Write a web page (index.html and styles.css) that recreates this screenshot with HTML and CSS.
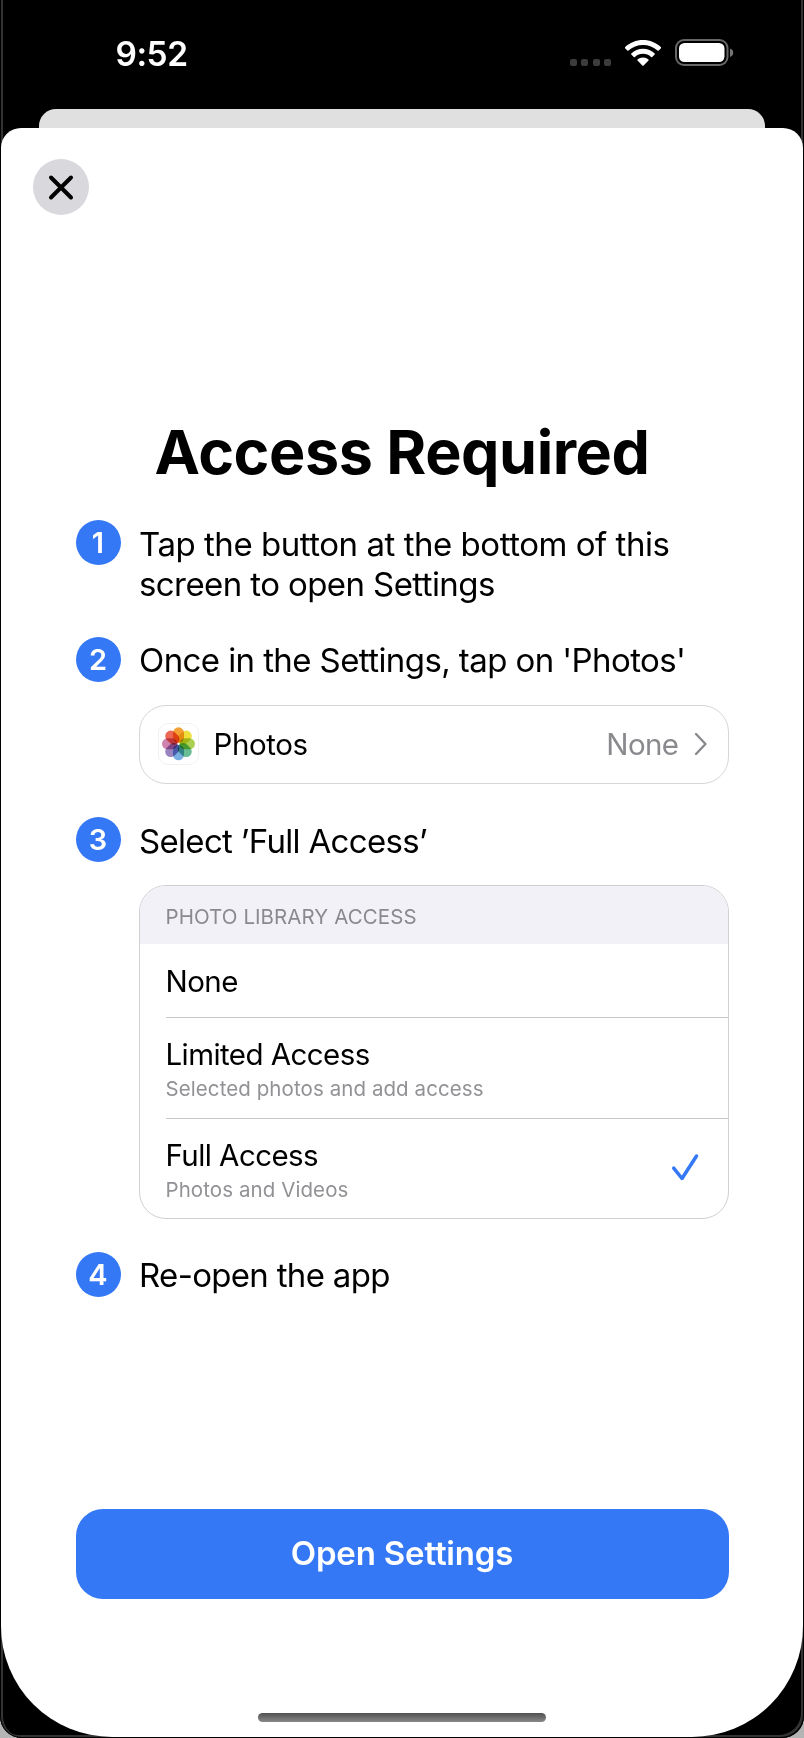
FILE: index.html
```html
<!DOCTYPE html>
<html lang="en">
<head>
<meta charset="utf-8">
<title>Access Required</title>
<link rel="stylesheet" href="styles.css">
</head>
<body>
<div class="device">
  <header class="status">
    <span class="time">9:52</span>
    <div class="indicators">
      <span class="signal"><i></i><i></i><i></i><i></i></span>
      <svg class="wifi" viewBox="0 0 36 26" fill="#fff"><path d="M18 0C11 0 4.700 2.700 0 7.200c-.4.400-.4.700 0 1.100l2.300 2.300c.3.300.8.300 1.200 0C7.400 7 12.400 5 18 5s10.600 2 14.500 5.600c.4.300.9.300 1.200 0L36 8.300c.4-.4.400-.7 0-1.100C31.300 2.700 25 0 18 0z"/><path d="M18 8.800c-4.500 0-8.600 1.700-11.700 4.600-.3.300-.3.700 0 1.100l2.500 2.400c.3.300.8.300 1.100 0 2.200-2 5-3.100 8.100-3.100s5.900 1.100 8.100 3.100c.3.300.8.300 1.100 0l2.500-2.400c.3-.4.300-.8 0-1.100C26.600 10.500 22.500 8.800 18 8.800z"/><path d="M18 17.500c-2.200 0-4.100.8-5.500 2.100-.3.300-.3.700 0 1l4.900 5c.4.400.8.400 1.200 0l4.900-5c.3-.3.300-.7 0-1-1.400-1.300-3.300-2.100-5.500-2.100z"/></svg>
      <svg class="battery" viewBox="0 0 59 28"><rect x="1" y="1" width="51.500" height="25" rx="8" fill="none" stroke="#676767" stroke-width="2"/><rect x="4" y="4" width="45.500" height="19" rx="5.500" fill="#fff"/><path d="M55 9.500c2 .7 3.200 2.200 3.200 4.200S57 17.200 55 18z" fill="#767676"/></svg>
    </div>
  </header>
  <div class="back-sheet"></div>
  <main class="sheet">
    <button class="close" aria-label="Close"><svg viewBox="0 0 56 56"><path d="M18 18.500 38 38.500M38 18.500 18 38.500" stroke="#000" stroke-width="4" stroke-linecap="round"/></svg></button>
    <h1 class="title">Access Required</h1>
    <ol class="steps">
      <li class="step">
        <span class="num">1</span>
        <div class="body"><p class="text"><span class="line-first">Tap the button at the bottom of this</span><br>screen to open Settings</p></div>
      </li>
      <li class="step">
        <span class="num">2</span>
        <div class="body">
          <p class="text">Once in the Settings, tap on 'Photos'</p>
          <div class="card photos">
            <svg class="app-icon" viewBox="0 0 41 42">
              <rect x=".5" y=".5" width="40" height="41" rx="9.500" fill="#fff" stroke="#f1f1f1"/>
              <g class="petals" transform="translate(20.500 20.800)">
                <rect x="-5.500" y="-16.500" width="11" height="15.500" rx="5.500" fill="#f3a034"/>
                <rect x="-5.500" y="-16.500" width="11" height="15.500" rx="5.500" fill="#efdf3d" transform="rotate(45)"/>
                <rect x="-5.500" y="-16.500" width="11" height="15.500" rx="5.500" fill="#acd052" transform="rotate(90)"/>
                <rect x="-5.500" y="-16.500" width="11" height="15.500" rx="5.500" fill="#69bd94" transform="rotate(135)"/>
                <rect x="-5.500" y="-16.500" width="11" height="15.500" rx="5.500" fill="#78aee2" transform="rotate(180)"/>
                <rect x="-5.500" y="-16.500" width="11" height="15.500" rx="5.500" fill="#9a84c0" transform="rotate(225)"/>
                <rect x="-5.500" y="-16.500" width="11" height="15.500" rx="5.500" fill="#cf83ae" transform="rotate(270)"/>
                <rect x="-5.500" y="-16.500" width="11" height="15.500" rx="5.500" fill="#eb6854" transform="rotate(315)"/>
              </g>
            </svg>
            <span class="label photos-label">Photos</span>
            <span class="label value">None</span>
            <svg class="chevron" viewBox="0 0 14 24"><path d="M2 2l9.500 10L2 22" fill="none" stroke="#8a8a8e" stroke-width="2.400" stroke-linecap="round" stroke-linejoin="round"/></svg>
          </div>
        </div>
      </li>
      <li class="step">
        <span class="num">3</span>
        <div class="body">
          <p class="text tight">Select ’Full Access’</p>
          <div class="card options">
            <div class="heading">PHOTO LIBRARY ACCESS</div>
            <div class="option none"><span class="label">None</span></div>
            <div class="option limited"><span class="label">Limited Access</span><span class="sub">Selected photos and add access</span></div>
            <div class="option full"><span class="label">Full Access</span><span class="sub">Photos and Videos</span>
              <svg class="check" viewBox="0 0 28 28"><path d="M2.700 15.200 11 25.500 25.500 3" fill="none" stroke="#3478f6" stroke-width="3.500" stroke-linecap="round" stroke-linejoin="round"/></svg>
            </div>
          </div>
        </div>
      </li>
      <li class="step">
        <span class="num">4</span>
        <div class="body"><p class="text tight">Re-open the app</p></div>
      </li>
    </ol>
    <button class="primary">Open Settings</button>
    <div class="home"></div>
  </main>
</div>
</body>
</html>
```
FILE: styles.css
```css
* { box-sizing: border-box; margin: 0; padding: 0; }
body { background: #b4b4b4; font-family: Inter, "Liberation Sans", sans-serif; color: #000; }
button { border: 0; font: inherit; }
.device { width: 804px; height: 1738px; padding: 0 1px 1px; background: #000; border-radius: 0 0 22px 22px; box-shadow: inset 1px 0 #000, inset -1px -1px #000, inset 3px 0 #333, inset -3px -3px #333; display: flex; flex-direction: column; overflow: hidden; }
.status { height: 109px; flex: none; display: flex; justify-content: space-between; padding: 33px 69px 0 114.500px; color: #fff; }
.time { font-size: 33.500px; font-weight: 600; line-height: 42px; letter-spacing: -.5px; }
.indicators { display: flex; align-items: flex-start; padding-top: 6px; }
.signal { display: flex; gap: 4.300px; margin: 20px 14px 0 0; }
.signal i { width: 7px; height: 7px; border-radius: 2px; background: #3c3c3c; }
.wifi { width: 36px; height: 26px; margin: .5px 14px 0 0; }
.battery { width: 59px; height: 28px; }
.back-sheet { flex: none; height: 18.500px; margin: 0 38px; background: #e0e0e0; border-radius: 17px 17px 0 0; }
.sheet { flex: 1; background: #fff; border-radius: 20px 20px 111px 111px; display: flex; flex-direction: column; padding: 31.500px 74.500px 0; }
.close { width: 56px; height: 56px; border-radius: 50%; background: #d9d8dd; margin-left: -43px; flex: none; }
.close svg { display: block; width: 56px; height: 56px; }
.title { margin-top: 199px; text-align: center; font-size: 61px; line-height: 76px; font-weight: 700; letter-spacing: -.45px; white-space: nowrap; }
.steps { list-style: none; margin-top: 30px; display: flex; flex-direction: column; gap: 33px; }
.step { display: flex; gap: 18px; }
.num { flex: none; width: 45px; height: 45px; border-radius: 50%; background: #3478f6; color: #fff; font-size: 29px; font-weight: 600; line-height: 45px; text-align: center; }
.body { flex: 1; padding-top: 3.500px; }
.text { font-size: 33px; line-height: 40px; white-space: nowrap; letter-spacing: -.59px; padding-left: .5px; }
.text .line-first { letter-spacing: -.47px; }
.text.tight { letter-spacing: -.68px; }
.card { margin-top: 24.500px; border: 1.500px solid #d6d6d8; border-radius: 27px; overflow: hidden; }
.photos { height: 79.500px; display: flex; align-items: center; padding: 0 20px 0 18px; }
.app-icon { width: 41px; height: 42px; margin-right: 15px; }
.petals rect { mix-blend-mode: multiply; }
.label { font-size: 29.500px; line-height: 36px; white-space: nowrap; letter-spacing: -.57px; }
.photos-label { letter-spacing: -.4px; }
.value { margin-left: auto; color: #8a8a8e; }
.chevron { width: 14px; height: 24px; margin-left: 15px; }
.options { height: 334px; margin-top: 24px; border-color: #d0d0d3; }
.heading { height: 58px; padding-left: 26px; background: #f2f1f7; color: #8a8a8e; font-size: 20.500px; line-height: 61px; letter-spacing: .07px; }
.option { margin-left: 26px; display: flex; flex-direction: column; position: relative; }
.option + .option { border-top: 1px solid #c8c8cb; }
.none { height: 73px; padding-top: 19px; }
.limited, .full { height: 101px; padding-top: 18px; }
.sub { color: #929296; font-size: 20.500px; line-height: 28px; letter-spacing: .08px; margin-top: 3px; }
.check { position: absolute; width: 28px; height: 28px; right: 28.500px; top: 34px; }
.primary { margin-top: auto; flex: none; height: 90.500px; padding-bottom: 2px; border-radius: 27px; background: #3478f6; color: #fff; font-size: 33px; font-weight: 600; letter-spacing: -.18px; }
.home { flex: none; width: 288px; height: 9.500px; margin: 113.500px auto 15px; border-radius: 5px; background: linear-gradient(#505050, #888); }
```
